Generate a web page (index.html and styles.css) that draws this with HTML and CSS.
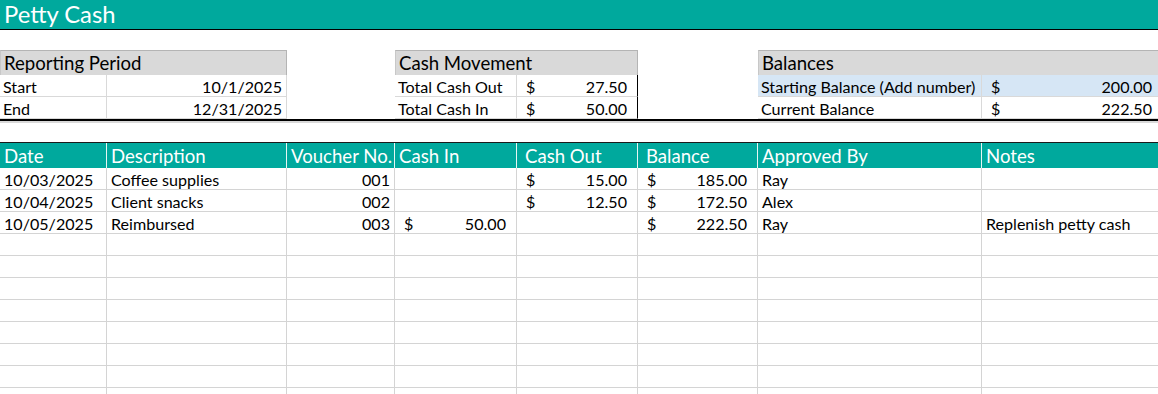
FILE: index.html
```html
<!DOCTYPE html>
<html lang="en">
<head>
<meta charset="utf-8">
<title>Petty Cash</title>
<link rel="stylesheet" href="styles.css">
</head>
<body>
<div class="sheet">
  <div class="title">Petty Cash</div>
  <div class="gap"></div>

  <div class="grid summary">
    <div class="sec span2">Reporting Period</div>
    <div class="blank"></div>
    <div class="sec span2">Cash Movement</div>
    <div class="blank"></div>
    <div class="sec span2 open">Balances</div>

    <div class="cell">Start</div>
    <div class="cell num">10/1/2025</div>
    <div class="blank"></div>
    <div class="cell">Total Cash Out</div>
    <div class="cell acct edge"><span>$</span><span>27.50</span></div>
    <div class="blank"></div>
    <div class="cell blue">Starting Balance (Add number)</div>
    <div class="cell acct blue open"><span>$</span><span>200.00</span></div>

    <div class="cell">End</div>
    <div class="cell num">12/31/2025</div>
    <div class="blank"></div>
    <div class="cell">Total Cash In</div>
    <div class="cell acct edge"><span>$</span><span>50.00</span></div>
    <div class="blank"></div>
    <div class="cell">Current Balance</div>
    <div class="cell acct open"><span>$</span><span>222.50</span></div>
  </div>

  <div class="divider"></div>
  <div class="gap2"></div>

  <div class="grid ledger">
    <div class="th">Date</div>
    <div class="th">Description</div>
    <div class="th">Voucher No.</div>
    <div class="th">Cash In</div>
    <div class="th indent">Cash Out</div>
    <div class="th indent">Balance</div>
    <div class="th">Approved By</div>
    <div class="th">Notes</div>

    <div class="td">10/03/2025</div>
    <div class="td">Coffee supplies</div>
    <div class="td num">001</div>
    <div class="td"></div>
    <div class="td acct"><span>$</span><span>15.00</span></div>
    <div class="td acct"><span>$</span><span>185.00</span></div>
    <div class="td">Ray</div>
    <div class="td"></div>

    <div class="td">10/04/2025</div>
    <div class="td">Client snacks</div>
    <div class="td num">002</div>
    <div class="td"></div>
    <div class="td acct"><span>$</span><span>12.50</span></div>
    <div class="td acct"><span>$</span><span>172.50</span></div>
    <div class="td">Alex</div>
    <div class="td"></div>

    <div class="td">10/05/2025</div>
    <div class="td">Reimbursed</div>
    <div class="td num">003</div>
    <div class="td acct"><span>$</span><span>50.00</span></div>
    <div class="td"></div>
    <div class="td acct"><span>$</span><span>222.50</span></div>
    <div class="td">Ray</div>
    <div class="td">Replenish petty cash</div>

    <div class="td"></div><div class="td"></div><div class="td"></div><div class="td"></div><div class="td"></div><div class="td"></div><div class="td"></div><div class="td"></div>
    <div class="td"></div><div class="td"></div><div class="td"></div><div class="td"></div><div class="td"></div><div class="td"></div><div class="td"></div><div class="td"></div>
    <div class="td"></div><div class="td"></div><div class="td"></div><div class="td"></div><div class="td"></div><div class="td"></div><div class="td"></div><div class="td"></div>
    <div class="td"></div><div class="td"></div><div class="td"></div><div class="td"></div><div class="td"></div><div class="td"></div><div class="td"></div><div class="td"></div>
    <div class="td"></div><div class="td"></div><div class="td"></div><div class="td"></div><div class="td"></div><div class="td"></div><div class="td"></div><div class="td"></div>
    <div class="td"></div><div class="td"></div><div class="td"></div><div class="td"></div><div class="td"></div><div class="td"></div><div class="td"></div><div class="td"></div>
    <div class="td"></div><div class="td"></div><div class="td"></div><div class="td"></div><div class="td"></div><div class="td"></div><div class="td"></div><div class="td"></div>
    <div class="td"></div><div class="td"></div><div class="td"></div><div class="td"></div><div class="td"></div><div class="td"></div><div class="td"></div><div class="td"></div>
  </div>
</div>
</body>
</html>
```

FILE: styles.css
```css
* { box-sizing: border-box; }

html, body {
  margin: 0;
  padding: 0;
  background: #ffffff;
  overflow: hidden;
}

body {
  font-family: "Lato", "Open Sans", sans-serif;
  font-size: 16.1px;
  color: #000000;
}

.sheet {
  width: 1158px;
  height: 394px;
  overflow: hidden;
}

.title {
  height: 30px;
  background: #00a99d;
  border-bottom: 1px solid #000000;
  color: #ffffff;
  font-size: 23.8px;
  line-height: 29px;
  padding-left: 4px;
  white-space: nowrap;
}

.gap { height: 20px; }

.grid {
  display: grid;
  grid-template-columns: 107px 180px 108px 122px 121px 120px 224px 181px;
  width: 1163px;
}

.summary {
  grid-template-rows: 25px 22px 22px;
}

.sec {
  background: #d9d9d9;
  border-top: 1px solid #b4b4b4;
  border-left: 1px solid #c8c8c8;
  border-right: 1px solid #b4b4b4;
  font-size: 18.6px;
  line-height: 25px;
  padding: 0 0 0 3px;
  white-space: nowrap;
}

.span2 { grid-column: span 2; }

.blank { }

.cell {
  border-right: 1px solid #d9d9d9;
  border-bottom: 1px solid #d9d9d9;
  line-height: 22px;
  padding: 1px 4px 0 3px;
  white-space: nowrap;
  overflow: hidden;
}

.cell.edge { border-right: 1px solid #000000; }

.blue { background: #d6e6f5; }

.num { text-align: right; }

.acct {
  display: flex;
  justify-content: space-between;
  padding-left: 9px;
  padding-right: 10px;
}

.divider {
  height: 4px;
  border-top: 2px solid #000000;
  background: #d9d9d9;
}

.gap2 {
  height: 20px;
  border-bottom: 1px solid #1a1a1a;
}

.ledger {
  grid-template-rows: 25px;
  grid-auto-rows: 22px;
}

.th {
  background: #00a99d;
  color: #ffffff;
  font-size: 18.6px;
  line-height: 26px;
  padding: 0 0 0 4px;
  border-right: 1px solid #e6f6f4;
  white-space: nowrap;
}

.th.indent { padding-left: 8px; }

.td {
  border-right: 1px solid #d4d4d4;
  border-bottom: 1px solid #d4d4d4;
  line-height: 22px;
  padding: 1px 4px 0 4px;
  white-space: nowrap;
  overflow: hidden;
}

.td.acct {
  padding-left: 9px;
  padding-right: 10px;
}
```
